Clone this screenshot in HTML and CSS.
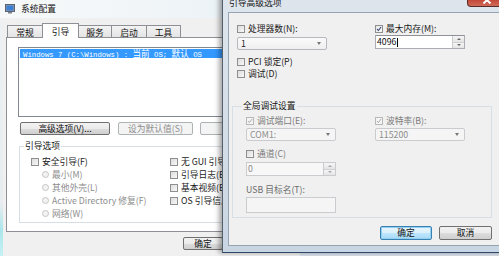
FILE: index.html
```html
<!DOCTYPE html>
<html lang="zh-CN">
<head>
<meta charset="utf-8">
<title>系统配置</title>
<link rel="stylesheet" href="styles.css">
</head>
<body>
<div class="desk">
  <div class="win back">
    <div class="back-title">
      <svg class="app-icon" width="10" height="10" viewBox="0 0 10 10">
        <rect x="0.5" y="0.5" width="9" height="7" fill="#9aa3ad" stroke="#5b6470"/>
        <rect x="1.5" y="1.5" width="7" height="5" fill="#3d7fd4"/>
        <rect x="3" y="8" width="4" height="1.5" fill="#7a838d"/>
      </svg>
      <span class="title-text">系统配置</span>
    </div>
    <div class="back-client">
      <div class="tabs">
        <div class="tab t1">常规</div>
        <div class="tab sel t2">引导</div>
        <div class="tab t3">服务</div>
        <div class="tab t4">启动</div>
        <div class="tab t5">工具</div>
      </div>
      <div class="page">
        <div class="listbox">
          <div class="item">Windows 7 (C:\Windows) : <span class="cjk">当前</span> OS; <span class="cjk">默认</span> OS</div>
        </div>
        <div class="btnrow">
          <div class="btn b-adv">高级选项(V)...</div>
          <div class="btn dis b-def">设为默认值(S)</div>
          <div class="btn dis b-del">删除(D)</div>
        </div>
        <div class="group g-boot">
          <div class="group-title">引导选项</div>
          <div class="boot-cols">
            <div class="col1">
              <div class="opt"><span class="cb"></span><span>安全引导(F)</span></div>
              <div class="opt sub dis"><span class="rb"></span><span>最小(M)</span></div>
              <div class="opt sub dis"><span class="rb"></span><span>其他外壳(L)</span></div>
              <div class="opt sub dis"><span class="rb"></span><span>Active Directory 修复(F)</span></div>
              <div class="opt sub dis"><span class="rb"></span><span>网络(W)</span></div>
            </div>
            <div class="col2">
              <div class="opt"><span class="cb"></span><span>无 GUI 引导(N)</span></div>
              <div class="opt"><span class="cb"></span><span>引导日志(B)</span></div>
              <div class="opt"><span class="cb"></span><span>基本视频(E)</span></div>
              <div class="opt"><span class="cb"></span><span>OS 引导信息(O)</span></div>
            </div>
          </div>
        </div>
      </div>
      <div class="back-footer">
        <div class="btn b-ok">确定</div>
      </div>
    </div>
  </div>

  <div class="win front">
    <div class="front-title">
      <span class="front-title-text">引导高级选项</span>
      <div class="close">
        <svg width="10" height="8" viewBox="0 0 10 8"><path d="M1.5 0.5 L8.5 7.5 M8.5 0.5 L1.5 7.5" stroke="#ffffff" stroke-width="2"/></svg>
      </div>
    </div>
    <div class="front-client">
      <div class="adv-top">
        <div class="colA">
          <div class="chk"><span class="cb"></span><span>处理器数(N):</span></div>
          <div class="combo c-cpu"><span class="combo-text">1</span><span class="arrow"></span></div>
          <div class="chk r-pci"><span class="cb"></span><span>PCI 锁定(P)</span></div>
          <div class="chk r-dbg"><span class="cb"></span><span>调试(D)</span></div>
        </div>
        <div class="colB">
          <div class="chk"><span class="cb on"><svg width="8" height="8" viewBox="0 0 8 8"><path d="M1.3 4 L3.2 6 L6.8 1.4" fill="none" stroke="#2f3f6e" stroke-width="1.4"/></svg></span><span>最大内存(M):</span></div>
          <div class="spin s-mem">
            <span class="spin-text">4096<span class="caret"></span></span>
            <span class="spin-btns"><span class="up"></span><span class="down"></span></span>
          </div>
        </div>
      </div>

      <div class="group g-dbg">
        <div class="group-title">全局调试设置</div>
        <div class="dbg-inner">
          <div class="dbg-row">
            <div class="dcolA">
              <div class="chk dis"><span class="cb dcb"><svg width="8" height="8" viewBox="0 0 8 8"><path d="M1.3 4 L3.2 6 L6.8 1.4" fill="none" stroke="#a9a9a9" stroke-width="1.3"/></svg></span><span>调试端口(E):</span></div>
              <div class="combo dis c-port"><span class="combo-text">COM1:</span><span class="arrow"></span></div>
            </div>
            <div class="dcolB">
              <div class="chk dis"><span class="cb dcb"><svg width="8" height="8" viewBox="0 0 8 8"><path d="M1.3 4 L3.2 6 L6.8 1.4" fill="none" stroke="#a9a9a9" stroke-width="1.3"/></svg></span><span>波特率(B):</span></div>
              <div class="combo dis c-baud"><span class="combo-text">115200</span><span class="arrow"></span></div>
            </div>
          </div>
          <div class="chk dis r-chan"><span class="cb"></span><span>通道(C)</span></div>
          <div class="spin dis s-chan">
            <span class="spin-text">0</span>
            <span class="spin-btns"><span class="up"></span><span class="down"></span></span>
          </div>
          <div class="usb-label dis">USB 目标名(T):</div>
          <div class="textbox dis"></div>
        </div>
      </div>

      <div class="front-btns">
        <div class="btn def">确定</div>
        <div class="btn b-cancel">取消</div>
      </div>
    </div>
  </div>
</div>
</body>
</html>
```

FILE: styles.css
```css
* { box-sizing: border-box; }

html, body {
  margin: 0;
  padding: 0;
}

body {
  width: 499px;
  height: 256px;
  overflow: hidden;
  font-family: "Noto Sans CJK SC", "Liberation Sans", sans-serif;
  font-size: 8.75px;
  color: #1a1a1a;
}

.desk {
  position: relative;
  width: 499px;
  height: 256px;
  overflow: hidden;
  background: #d9e3ec;
}

.win { position: absolute; }

/* ---------- back window: 系统配置 ---------- */
.back {
  left: 0;
  top: 0;
  width: 300px;
  height: 256px;
  display: flex;
  flex-direction: column;
  background: linear-gradient(to bottom, #eef2f5 0%, #e6ecf0 80%, #a9e6ec 90%, #c6f1f4 100%);
}

.back-title {
  height: 18px;
  display: flex;
  align-items: center;
  padding-left: 5px;
  background: linear-gradient(to right, #f7f9fa 0%, #f2f6f8 40%, #e7f0f5 100%);
}

.app-icon { flex: none; }

.title-text {
  margin-left: 6px;
  line-height: 10px;
  color: #111;
}

.back-client {
  flex: 1;
  margin-left: 3px;
  background: #f0f0f0;
  padding-top: 5px;
  display: flex;
  flex-direction: column;
}

.tabs {
  display: flex;
  align-items: flex-end;
  height: 14px;
  margin-left: 4px;
  position: relative;
  z-index: 1;
}

.tab {
  height: 12px;
  border: 1px solid #8e9096;
  border-bottom: none;
  border-left-width: 0;
  background: linear-gradient(#f3f3f3, #e4e4e4);
  text-align: center;
  line-height: 11px;
  padding-top: 1px;
  color: #111;
}
.tab.t1 { width: 36px; border-left-width: 1px; }
.tab.t2 { width: 37px; }
.tab.t3 { width: 33px; }
.tab.t4 { width: 35px; }
.tab.t5 { width: 34px; }
.tab.sel {
  height: 15px;
  margin-bottom: -1px;
  background: #ffffff;
  border-left-width: 1px;
  margin-left: -1px;
  padding-top: 2px;
}

.page {
  margin-left: 3px;
  height: 195px;
  border: 1px solid #8e9096;
  background: #ffffff;
  padding: 9px 0 0 11px;
}

.listbox {
  height: 70px;
  width: 260px;
  border: 1px solid #828790;
  padding: 1px;
  background: #fff;
}

.item {
  height: 9px;
  line-height: 9px;
  background: #3399ff;
  color: #ffffff;
  padding-left: 3px;
  white-space: nowrap;
  font-family: "Liberation Mono", "Noto Sans CJK SC", monospace;
  font-size: 7.3px;
}
.item .cjk {
  font-family: "Noto Sans CJK SC", sans-serif;
  font-size: 8.6px;
}

.btnrow {
  display: flex;
  margin-top: 5px;
  margin-left: 2px;
  gap: 8px;
}

.btn {
  height: 13px;
  border: 1px solid #707070;
  border-radius: 2px;
  background: linear-gradient(#f2f2f2 0%, #ebebeb 50%, #dddddd 51%, #cfcfcf 100%);
  display: flex;
  align-items: center;
  justify-content: center;
  line-height: 10px;
  color: #111;
  white-space: nowrap;
}
.btn.dis {
  border-color: #adb2b5;
  background: #f4f4f4;
  color: #8d8d8d;
}
.b-adv { width: 90px; }
.b-def { width: 75px; margin-right: -1px; }
.b-del { width: 75px; }

.group {
  border: 1px solid #d5dfe5;
}

.group-title {
  width: max-content;
  height: 10px;
  line-height: 10px;
  margin-top: -6px;
  padding: 0 1px;
  color: #111;
}

.g-boot {
  margin-top: 11px;
  margin-left: 1px;
  width: 250px;
  padding-bottom: 2px;
}
.g-boot .group-title {
  margin-left: 4px;
  background: #ffffff;
}

.boot-cols {
  display: flex;
  margin-top: 4px;
  padding-left: 11px;
}
.col1 { width: 139px; }

.opt {
  height: 13px;
  display: flex;
  align-items: center;
  white-space: nowrap;
}
.opt.sub { padding-left: 11px; }
.opt.dis { color: #8d8d8d; }

.cb {
  flex: none;
  width: 8px;
  height: 8px;
  border: 1px solid #8f8f8f;
  background: linear-gradient(135deg, #dcdcdc, #f8f8f8);
  margin-right: 3px;
  display: flex;
  align-items: center;
  justify-content: center;
}
.cb svg { display: block; }
.cb.on { background: linear-gradient(135deg, #e6e6e6, #fbfbfb); }
.cb.dcb { border-color: #b8b8b8; background: #f4f4f4; }

.rb {
  flex: none;
  width: 7px;
  height: 7px;
  border-radius: 50%;
  border: 1px solid #c4c4c4;
  background: #f2f2f2;
  margin-right: 3px;
}

.back-footer {
  display: flex;
  padding-left: 180px;
  margin-top: 5px;
}
.b-ok { width: 40px; }

/* ---------- front window: 引导高级选项 ---------- */
.front {
  left: 222px;
  top: -20px;
  width: 290px;
  height: 273px;
  border: 1px solid #55606d;
  border-bottom-color: #2f4868;
  border-radius: 7px 7px 0 0;
  background: linear-gradient(to bottom, #dfe6ed 0%, #d3dde7 60%, #c8d5e2 100%);
  padding: 0 5px 6px 5px;
  display: flex;
  flex-direction: column;
  box-shadow: -3px 0 5px rgba(0, 0, 0, 0.35);
}

.front-title {
  height: 31px;
  flex: none;
  display: flex;
  align-items: flex-start;
}

.front-title-text {
  align-self: flex-end;
  margin-bottom: 4px;
  margin-left: 1px;
  line-height: 10px;
  color: #141414;
}

.close {
  margin-left: auto;
  margin-top: 8px;
  width: 39px;
  height: 18px;
  border: 1px solid #5b2c27;
  border-top: none;
  border-radius: 0 0 4px 4px;
  background: linear-gradient(#dc9386 0%, #cc5a4b 45%, #bf3f2f 55%, #d06a58 100%);
  display: flex;
  align-items: center;
  justify-content: center;
  padding-top: 4px;
}
.close svg { display: block; }

.front-client {
  flex: 1;
  background: #f0f0f0;
  border: 1px solid #97a5b3;
  padding: 11px 0 0 3px;
  display: flex;
  flex-direction: column;
}

.adv-top {
  display: flex;
  margin-left: 5px;
}
.colA { width: 138px; }
.colB { width: 90px; }

.chk {
  height: 9px;
  display: flex;
  align-items: center;
  white-space: nowrap;
  line-height: 10px;
}
.chk.dis { color: #7c7c7c; }

.combo {
  width: 90px;
  height: 13px;
  border: 1px solid #b5b8bd;
  border-radius: 2px;
  background: linear-gradient(#fafafa, #efefef);
  display: flex;
  align-items: center;
  padding-left: 3px;
  line-height: 10px;
}
.combo.dis { color: #8d8d8d; border-color: #c9cbce; background: #f5f5f5; }
.arrow {
  margin-left: auto;
  margin-right: 5px;
  width: 0;
  height: 0;
  border-left: 2.5px solid transparent;
  border-right: 2.5px solid transparent;
  border-top: 3px solid #777;
}
.c-cpu { margin-top: 4px; }
.r-pci { margin-top: 7px; }
.r-dbg { margin-top: 3px; }

.spin {
  width: 90px;
  height: 14px;
  border: 1px solid #abadb3;
  border-top-color: #8e9297;
  background: #ffffff;
  display: flex;
  align-items: stretch;
  line-height: 10px;
}
.spin.dis { border-color: #c9cbce; background: #f7f7f7; color: #8d8d8d; }
.spin-text {
  flex: 1;
  display: flex;
  align-items: center;
  padding-left: 1px;
  color: #111;
}
.spin.dis .spin-text { color: #8d8d8d; }
.caret {
  display: inline-block;
  width: 1px;
  height: 9px;
  background: #000;
  margin-left: 1px;
}
.spin-btns {
  width: 12px;
  display: flex;
  flex-direction: column;
  border-left: 1px solid #c9cbce;
}
.spin-btns span {
  flex: 1;
  display: flex;
  align-items: center;
  justify-content: center;
  background: linear-gradient(#f6f6f6, #e4e4e4);
}
.spin-btns .up { border-bottom: 1px solid #d0d0d0; }
.spin-btns .up::before {
  content: "";
  border-left: 2px solid transparent;
  border-right: 2px solid transparent;
  border-bottom: 2px solid #6a6a6a;
}
.spin-btns .down::before {
  content: "";
  border-left: 2px solid transparent;
  border-right: 2px solid transparent;
  border-top: 2px solid #6a6a6a;
}
.spin.dis .spin-btns .up::before { border-bottom-color: #a8a8a8; }
.spin.dis .spin-btns .down::before { border-top-color: #a8a8a8; }
.s-mem { margin-top: 2px; }

.g-dbg {
  margin-top: 28px;
  width: 260px;
  padding-bottom: 4px;
}
.g-dbg .group-title {
  margin-left: 9px;
  background: #f0f0f0;
}
.dbg-inner { padding-left: 13px; }
.dbg-row { display: flex; margin-top: 5px; }
.dcolA { width: 129px; }
.dcolB { width: 90px; }
.c-port, .c-baud { margin-top: 3px; }
.r-chan { margin-top: 8px; }
.r-chan .cb { border-color: #8f8f8f; }
.s-chan { margin-top: 4px; }

.usb-label {
  margin-top: 9px;
  height: 10px;
  line-height: 10px;
  color: #6c6c6c;
}
.textbox {
  margin-top: 2px;
  width: 90px;
  height: 16px;
  border: 1px solid #c9cbce;
  background: #f5f5f5;
}

.front-btns {
  display: flex;
  justify-content: flex-end;
  gap: 7px;
  width: 260px;
  margin-top: 8px;
}
.front-btns .btn { height: 14px; }
.btn.def {
  width: 52px;
  border-color: #3c7fb1;
  background: linear-gradient(#eaf6fd 0%, #d9f0fc 50%, #bee6fd 51%, #a7d9f5 100%);
  box-shadow: inset 0 0 0 1px #8fd0f5;
}
.b-cancel { width: 53px; }
```
